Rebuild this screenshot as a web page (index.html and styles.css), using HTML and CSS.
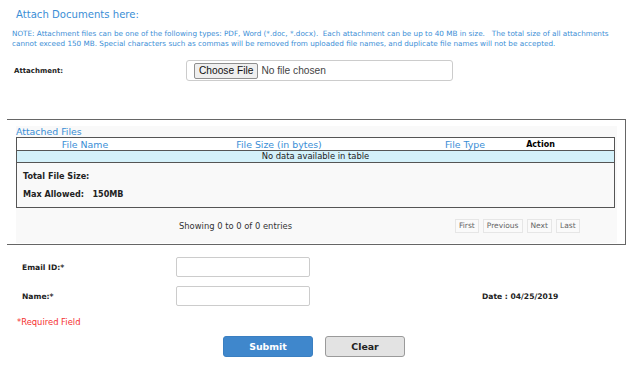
FILE: index.html
```html
<!DOCTYPE html>
<html>
<head>
<meta charset="utf-8">
<link rel="stylesheet" href="styles.css">
</head>
<body>
<div class="page">
  <h1 class="title">Attach Documents here:</h1>
  <p class="note">NOTE: Attachment files can be one of the following types: PDF, Word (*.doc, *.docx).&nbsp; Each attachment can be up to 40 MB in size.&nbsp;&nbsp; The total size of all attachments cannot exceed 150 MB. Special characters such as commas will be removed from uploaded file names, and duplicate file names will not be accepted.</p>
  <div class="attach-row">
    <label class="lbl attach-lbl">Attachment:</label>
    <div class="file-box"><span class="choose">Choose File</span><span class="nofile">No file chosen</span></div>
  </div>

  <div class="files-box">
    <div class="panel">
      <div class="caption">Attached Files</div>
      <div class="tbl">
        <div class="thead">
          <span class="th th-name">File Name</span>
          <span class="th th-size">File Size (in bytes)</span>
          <span class="th th-type">File Type</span>
          <span class="th th-action">Action</span>
        </div>
        <div class="empty">No data available in table</div>
        <div class="summary">
          <div class="sum-line">Total File Size:</div>
          <div class="sum-line">Max Allowed:&nbsp;&nbsp; 150MB</div>
        </div>
      </div>
      <div class="pager">
        <span class="info">Showing 0 to 0 of 0 entries</span>
        <div class="pages">
          <span class="pbtn">First</span>
          <span class="pbtn">Previous</span>
          <span class="pbtn">Next</span>
          <span class="pbtn">Last</span>
        </div>
      </div>
    </div>
  </div>

  <div class="form">
    <div class="frow">
      <label class="lbl flbl">Email ID:*</label>
      <div class="tinput"></div>
    </div>
    <div class="frow">
      <label class="lbl flbl">Name:*</label>
      <div class="tinput"></div>
      <span class="lbl date">Date : 04/25/2019</span>
    </div>
    <div class="req">*Required Field</div>
    <div class="actions">
      <span class="btn submit">Submit</span>
      <span class="btn clear">Clear</span>
    </div>
  </div>
</div>
</body>
</html>
```

FILE: styles.css
```css
* { box-sizing: border-box; }
body {
  margin: 0;
  background: #fff;
  font-family: "DejaVu Sans", Verdana, sans-serif;
  color: #222;
}
.page { width: 633px; }
.title {
  margin: 0;
  padding: 7px 0 0 16px;
  font-size: 10.1px;
  font-weight: normal;
  color: #3a8ed6;
  line-height: 15px;
}
.note {
  margin: 7px 0 0 12px;
  width: 600px;
  font-size: 7.24px;
  line-height: 10px;
  color: #3a8ed6;
}
.attach-row {
  display: flex;
  align-items: center;
  margin-top: 11px;
  height: 21px;
}
.lbl { font-size: 7.6px; font-weight: bold; color: #222; }
.attach-lbl { margin-left: 14px; width: 172px; font-size: 7px; }
.file-box {
  width: 267px;
  height: 21px;
  border: 1px solid #ccc;
  border-radius: 3px;
  display: flex;
  align-items: center;
  padding-left: 7px;
  font-family: "Liberation Sans", Arial, sans-serif;
  font-size: 10.2px;
  color: #444;
}
.choose {
  background: #efefef;
  border: 1px solid #8f8f8f;
  border-radius: 2px;
  padding: 1px 4px;
  color: #111;
  margin-right: 3px;
  line-height: 12px;
}
.files-box {
  margin: 38px 0 0 7px;
  width: 619px;
  height: 126px;
  border-top: 1px solid #666;
  border-right: 1px solid #666;
  border-bottom: 1px solid #666;
  padding: 6px 0 0 9px;
}
.panel {
  width: 601px;
  height: 117px;
  background: #f9f9f9;
}
.caption {
  font-size: 9.4px;
  color: #3a8ed6;
  line-height: 11px;
}
.tbl {
  width: 599px;
  border: 1px solid #555;
  height: 71px;
}
.thead {
  display: flex;
  height: 12px;
  align-items: center;
  font-size: 9.4px;
  line-height: 11px;
  background: #fff;
}
.th { color: #3a8ed6; text-align: center; }
.th-name { width: 136px; }
.th-size { width: 252px; }
.th-type { width: 120px; }
.th-action { color: #000; font-weight: bold; font-size: 8px; width: 31px; }
.empty {
  height: 13px;
  background: #d4f1fa;
  border-top: 1px solid #555;
  border-bottom: 1px solid #555;
  text-align: center;
  font-size: 8.4px;
  line-height: 11px;
  color: #222;
}
.summary { padding: 8px 0 0 6px; }
.sum-line {
  font-size: 8.1px;
  font-weight: bold;
  color: #222;
  line-height: 10px;
  margin-bottom: 8px;
}
.pager {
  display: flex;
  align-items: center;
  height: 36px;
}
.info {
  width: 439px;
  text-align: center;
  font-size: 8.4px;
  color: #333;
}
.pages { display: flex; gap: 4px; }
.pbtn {
  border: 1px solid #e6e6e6;
  padding: 0 3px;
  font-size: 7.5px;
  line-height: 12px;
  color: #666;
  background: #fafafa;
}
.form { padding-top: 12px; }
.frow {
  display: flex;
  align-items: center;
  height: 20px;
  margin-bottom: 9px;
}
.flbl { margin-left: 22px; width: 154px; }
.tinput {
  width: 134px;
  height: 20px;
  border: 1px solid #ccc;
  border-radius: 2px;
  background: #fff;
}
.date { margin-left: 172px; }
.req {
  margin: 11px 0 0 17px;
  font-size: 8.4px;
  color: #f53030;
  line-height: 11px;
}
.actions {
  display: flex;
  gap: 12px;
  margin: 8px 0 0 223px;
}
.btn {
  height: 21px;
  display: flex;
  align-items: center;
  justify-content: center;
  font-size: 9.4px;
  font-weight: bold;
  border-radius: 3px;
}
.submit {
  width: 90px;
  background: #3f87cc;
  color: #fff;
  border: 1px solid #3a7fc1;
}
.clear {
  width: 80px;
  background: #e3e3e3;
  color: #222;
  border: 1px solid #9a9a9a;
}
```
